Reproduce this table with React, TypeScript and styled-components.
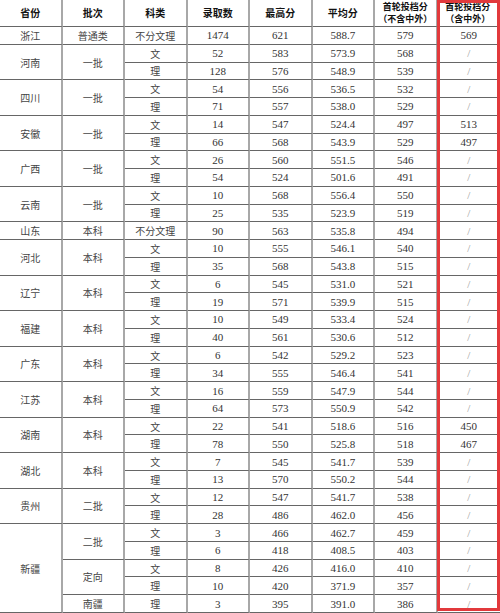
import React from 'react'
import styled, { createGlobalStyle } from 'styled-components'

const GlobalStyle = createGlobalStyle`
  html, body {
    margin: 0;
    padding: 0;
    background: #fff;
  }
`

const Page = styled('div')`
  position: relative;
  width: 500px;
  height: 613px;
  overflow: hidden;
`

const Grid = styled('div')`
  display: grid;
  grid-template-columns: repeat(8, 1fr);
  grid-template-rows: 27px repeat(33, 1fr);
  width: 500px;
  height: 613px;
  font-family: 'Liberation Serif', 'Noto Sans CJK SC', serif;
  color: #333;
`

const Head = styled('div')<{ $small?: boolean }>`
  display: flex;
  flex-flow: column nowrap;
  align-items: center;
  justify-content: center;
  border-right: 2px solid #a8a8a8;
  border-bottom: 1px solid #666;
  font-family: 'Noto Sans CJK SC', 'Liberation Sans', sans-serif;
  font-weight: 700;
  font-size: ${({ $small }) => ($small ? '9px' : '10px')};
  line-height: ${({ $small }) => ($small ? '12px' : '14px')};
  color: #111;

  &:last-child {
    border-right: none;
  }
`

const HeadLine = styled('span')`
  display: block;
  height: 12px;
  white-space: nowrap;
`

const Cell = styled('div')<{ $span?: number; $zh?: boolean; $muted?: boolean; $last?: boolean }>`
  grid-row: span ${({ $span }) => $span ?? 1};
  display: flex;
  align-items: center;
  justify-content: center;
  border-right: ${({ $last }) => ($last ? 'none' : '2px solid #a8a8a8')};
  border-bottom: 1px solid #666;
  font-size: ${({ $zh }) => ($zh ? '10px' : '11px')};
  font-family: ${({ $zh }) => ($zh ? "'Noto Sans CJK SC', sans-serif" : "'Liberation Serif', serif")};
  color: ${({ $muted, $zh }) => ($muted ? '#999' : $zh ? '#444' : '#333')};
`

const Highlight = styled('div')`
  position: absolute;
  left: 437px;
  top: 0;
  width: 63px;
  height: 611px;
  box-sizing: border-box;
  border: 3px solid #e2393c;
  pointer-events: none;
`

type Item = [string, string, string, string, string, string]

interface Batch {
  name: string
  items: Item[]
}

interface Group {
  prov: string
  batches: Batch[]
}

const one = (name: string, items: Item[]): Batch[] => [{ name, items }]

const data: Group[] = [
  { prov: '浙江', batches: one('普通类', [['不分文理', '1474', '621', '588.7', '579', '569']]) },
  { prov: '河南', batches: one('一批', [['文', '52', '583', '573.9', '568', '/'], ['理', '128', '576', '548.9', '539', '/']]) },
  { prov: '四川', batches: one('一批', [['文', '54', '556', '536.5', '532', '/'], ['理', '71', '557', '538.0', '529', '/']]) },
  { prov: '安徽', batches: one('一批', [['文', '14', '547', '524.4', '497', '513'], ['理', '66', '568', '543.9', '529', '497']]) },
  { prov: '广西', batches: one('一批', [['文', '26', '560', '551.5', '546', '/'], ['理', '54', '524', '501.6', '491', '/']]) },
  { prov: '云南', batches: one('一批', [['文', '10', '568', '556.4', '550', '/'], ['理', '25', '535', '523.9', '519', '/']]) },
  { prov: '山东', batches: one('本科', [['不分文理', '90', '563', '535.8', '494', '/']]) },
  { prov: '河北', batches: one('本科', [['文', '10', '555', '546.1', '540', '/'], ['理', '35', '568', '543.8', '515', '/']]) },
  { prov: '辽宁', batches: one('本科', [['文', '6', '545', '531.0', '521', '/'], ['理', '19', '571', '539.9', '515', '/']]) },
  { prov: '福建', batches: one('本科', [['文', '10', '549', '533.4', '524', '/'], ['理', '40', '561', '530.6', '512', '/']]) },
  { prov: '广东', batches: one('本科', [['文', '6', '542', '529.2', '523', '/'], ['理', '34', '555', '546.4', '541', '/']]) },
  { prov: '江苏', batches: one('本科', [['文', '16', '559', '547.9', '544', '/'], ['理', '64', '573', '550.9', '542', '/']]) },
  { prov: '湖南', batches: one('本科', [['文', '22', '541', '518.6', '516', '450'], ['理', '78', '550', '525.8', '518', '467']]) },
  { prov: '湖北', batches: one('本科', [['文', '7', '545', '541.7', '539', '/'], ['理', '13', '570', '550.2', '544', '/']]) },
  { prov: '贵州', batches: one('二批', [['文', '12', '547', '541.7', '538', '/'], ['理', '28', '486', '462.0', '456', '/']]) },
  {
    prov: '新疆',
    batches: [
      { name: '二批', items: [['文', '3', '466', '462.7', '459', '/'], ['理', '6', '418', '408.5', '403', '/']] },
      { name: '定向', items: [['文', '8', '426', '416.0', '410', '/'], ['理', '10', '420', '371.9', '357', '/']] },
      { name: '南疆', items: [['理', '3', '395', '391.0', '386', '/']] }
    ]
  }
]

const headers = ['省份', '批次', '科类', '录取数', '最高分', '平均分']

const App = (): JSX.Element => {
  const cells: JSX.Element[] = []
  data.forEach((g) => {
    const total = g.batches.reduce((n, b) => n + b.items.length, 0)
    g.batches.forEach((b, bi) => {
      b.items.forEach((it, ii) => {
        const key = `${g.prov}-${bi}-${ii}`
        if (bi === 0 && ii === 0) cells.push(<Cell key={key + 'p'} $span={total} $zh>{g.prov}</Cell>)
        if (ii === 0) cells.push(<Cell key={key + 'b'} $span={b.items.length} $zh>{b.name}</Cell>)
        cells.push(<Cell key={key + 't'} $zh>{it[0]}</Cell>)
        cells.push(<Cell key={key + 'c'}>{it[1]}</Cell>)
        cells.push(<Cell key={key + 'm'}>{it[2]}</Cell>)
        cells.push(<Cell key={key + 'a'}>{it[3]}</Cell>)
        cells.push(<Cell key={key + 'f'}>{it[4]}</Cell>)
        cells.push(<Cell key={key + 'i'} $last $muted={it[5] === '/'}>{it[5]}</Cell>)
      })
    })
  })

  return (
    <>
      <GlobalStyle />
      <Page>
        <Grid>
          {headers.map((h) => <Head key={h}>{h}</Head>)}
          <Head $small><HeadLine>首轮投档分</HeadLine><HeadLine>（不含中外）</HeadLine></Head>
          <Head $small><HeadLine>首轮投档分</HeadLine><HeadLine>（含中外）</HeadLine></Head>
          {cells}
        </Grid>
        <Highlight />
      </Page>
    </>
  )
}

export default App
